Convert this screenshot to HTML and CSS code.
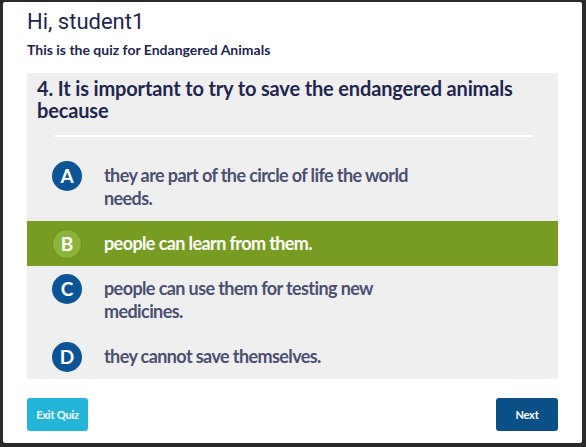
FILE: index.html
```html
<!DOCTYPE html>
<html lang="en">
<head>
  <meta charset="UTF-8" />
  <title>Quiz</title>
  <meta name="viewport" content="width=device-width, initial-scale=1.0" />
  <link rel="stylesheet" href="styles.css">
</head>
<body>

<div class="modal">
  <div class="modal-head">
    <h1>Hi, student1</h1>
    <p class="subtitle">This is the quiz for Endangered Animals</p>
  </div>

  <div class="quiz-panel">
    <h2 class="question">4. It is important to try to save the endangered animals because</h2>
    <div class="divider"></div>

    <div class="option">
      <span class="letter">A</span>
      <span class="answer">they are part of the circle of life the world needs.</span>
    </div>
    <div class="option selected">
      <span class="letter">B</span>
      <span class="answer">people can learn from them.</span>
    </div>
    <div class="option">
      <span class="letter">C</span>
      <span class="answer">people can use them for testing new medicines.</span>
    </div>
    <div class="option">
      <span class="letter">D</span>
      <span class="answer">they cannot save themselves.</span>
    </div>
  </div>

  <div class="actions">
    <button class="btn btn-exit">Exit Quiz</button>
    <button class="btn btn-next">Next</button>
  </div>
</div>

</body>
</html>
```

FILE: styles.css
```css
:root {
  --navy: #1f2650;
  --answer: #4b5073;
  --blue: #0b5596;
  --green: #779c21;
  --panel: #efefef;
}

body {
  margin: 0;
  height: 447px;
  background: #2a2a2a;
  font-family: Lato, "Open Sans", sans-serif;
  overflow: hidden;
}

.modal {
  margin: 2px 4px 0 3px;
  height: 441px;
  box-sizing: border-box;
  background: #fff;
  border-radius: 2px;
  padding: 0 24px;
}

.modal-head h1 {
  margin: 0;
  padding-top: 7px;
  font-family: Roboto, sans-serif;
  font-weight: 400;
  font-size: 22px;
  line-height: 26px;
  color: var(--navy);
}

.subtitle {
  margin: 6px 0 0 0;
  font-size: 14px;
  font-weight: 700;
  line-height: 17px;
  color: var(--navy);
}

.quiz-panel {
  margin-top: 15px;
  background: var(--panel);
}

.question {
  margin: 0;
  padding: 4px 10px 0 10px;
  font-size: 20px;
  line-height: 22px;
  font-weight: 700;
  color: var(--navy);
  letter-spacing: -0.15px;
}

.divider {
  height: 2px;
  background: #fff;
  margin: 14px 26px 16px 27px;
}

.option {
  display: flex;
  align-items: flex-start;
  gap: 22px;
  padding: 11px 0 11px 25px;
}

.letter {
  flex: none;
  width: 30px;
  height: 30px;
  margin: -3px 0 -4px 0;
  border-radius: 50%;
  background: var(--blue);
  color: #fff;
  font-weight: 700;
  font-size: 19px;
  line-height: 30px;
  text-align: center;
}

.answer {
  max-width: 320px;
  font-size: 18px;
  line-height: 23px;
  font-weight: 700;
  color: var(--answer);
  letter-spacing: -0.6px;
}

.option.selected {
  background: var(--green);
}

.option.selected .letter {
  background: #8cb43a;
  box-shadow: inset 0 0 0 1px #6b8d1d;
}

.option.selected .answer {
  color: #fff;
}

.actions {
  display: flex;
  justify-content: space-between;
  margin-top: 19px;
}

.btn {
  height: 33px;
  border: none;
  border-radius: 3px;
  color: #fff;
  font-family: Lato, sans-serif;
  font-weight: 700;
  font-size: 11px;
  letter-spacing: -0.2px;
  cursor: pointer;
}

.btn-exit {
  width: 61px;
  background: #23b5d8;
}

.btn-next {
  width: 62px;
  background: #0a4f86;
}
```
